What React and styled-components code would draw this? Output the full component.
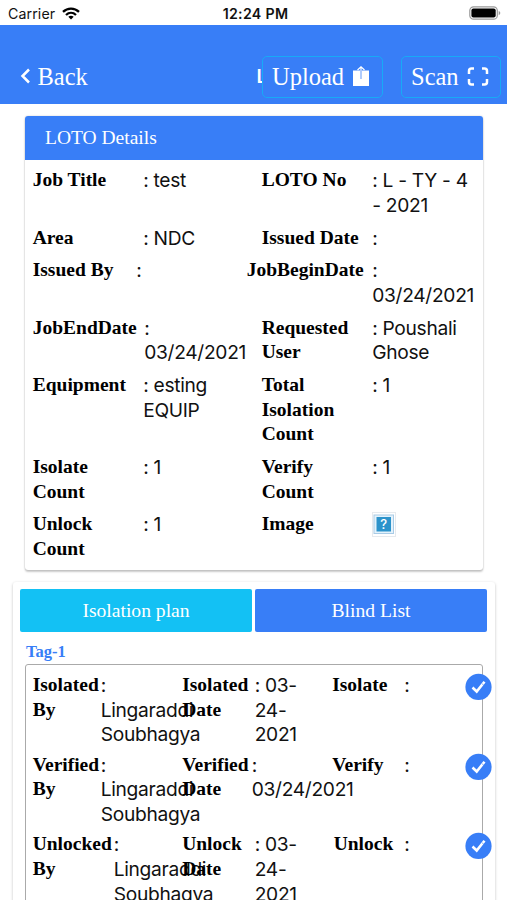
import React from "react";
import styled, { createGlobalStyle } from "styled-components";

const GlobalStyle = createGlobalStyle`
  * {
    box-sizing: border-box;
  }
  body {
    margin: 0;
    height: 900px;
    overflow: hidden;
    background: #fff;
    color: #111;
    font-family: Inter, "Liberation Sans", sans-serif;
  }
`;

const serif = '"Liberation Serif", serif';

const Screen = styled.div`
  width: 507px;
  height: 900px;
  overflow: hidden;
`;

const StatusBar = styled.div`
  display: grid;
  grid-template-columns: 1fr auto 1fr;
  align-items: center;
  height: 25px;
  padding: 2px 6px 0 8px;
  font-size: 14.2px;
  .time {
    padding-left: 2px;
    font-weight: 600;
    letter-spacing: 0.3px;
  }
  .carrier {
    display: flex;
    align-items: center;
    gap: 7px;
    letter-spacing: 0.1px;
  }
  .battery {
    justify-self: end;
    display: flex;
    margin-bottom: 1px;
  }
`;

const Header = styled.header`
  display: flex;
  align-items: center;
  height: 79px;
  padding: 24px 6.5px 0 19.5px;
  background: #387ef7;
  color: #fff;
  font-family: ${serif};
  font-size: 24.5px;
`;

const BackButton = styled.div`
  display: flex;
  align-items: center;
  gap: 7px;
  flex: 1;
`;

const HeaderTitle = styled.div`
  width: 5px;
  overflow: hidden;
  font-family: Inter, sans-serif;
  font-size: 19px;
  font-weight: 600;
`;

const HeaderButton = styled.div`
  display: flex;
  align-items: center;
  justify-content: space-between;
  width: ${({ width }) => width};
  height: 42px;
  padding: ${({ pad }) => pad};
  margin-right: ${({ gap }) => gap || "0"};
  border: 1.5px solid #17aaf6;
  border-radius: 5px;
`;

const Card = styled.section`
  width: 458px;
  height: 454px;
  margin: 12px 0 0 25px;
  border-radius: 3px;
  box-shadow: 0 2px 2px rgba(0, 0, 0, 0.2), 0 0 2px rgba(0, 0, 0, 0.2);
`;

const CardHeader = styled.div`
  height: 44px;
  padding-left: 20px;
  border-radius: 3px 3px 0 0;
  background: #387ef7;
  color: #fff;
  font-family: ${serif};
  font-size: 19.5px;
  line-height: 43px;
`;

const DetailRow = styled.div`
  display: grid;
  grid-template-columns: 110.5px 118.5px 110.5px 1fr;
  padding: 8.2px 0 0 7.7px;
`;

const Label = styled.div`
  margin-left: ${({ shift }) => shift || "0"};
  color: #000;
  font-family: ${serif};
  font-size: 19.5px;
  font-weight: bold;
  line-height: 24.6px;
  white-space: pre;
`;

const Value = styled.div`
  margin-left: ${({ shift }) => shift || "0"};
  font-size: 19.2px;
  letter-spacing: -0.3px;
  line-height: 24.6px;
  white-space: pre;
`;

const Panel = styled.section`
  width: 482px;
  height: 400px;
  margin: 12px 0 0 13px;
  padding: 7px 7px 0;
  border-radius: 3px;
  box-shadow: 0 1px 3px rgba(0, 0, 0, 0.25);
`;

const Tabs = styled.div`
  display: flex;
  gap: 3px;
`;

const Tab = styled.div`
  width: 232px;
  height: 43px;
  border-radius: 2px;
  background: ${({ active }) => (active ? "#13c1f4" : "#387ef7")};
  color: #fff;
  font-family: ${serif};
  font-size: 19.6px;
  line-height: 43px;
  text-align: center;
`;

const TagName = styled.div`
  height: 32px;
  padding: 10px 0 0 6px;
  color: #387ef7;
  font-family: ${serif};
  font-size: 16.5px;
  font-weight: bold;
`;

const TagBox = styled.div`
  width: 457.5px;
  height: 300px;
  margin-left: 5px;
  padding-left: 6.7px;
  border: 1.5px solid #aaa;
  border-radius: 3px;
`;

const TagRow = styled.div`
  display: grid;
  grid-template-columns: 68px 81.5px 72.5px 77.5px 72px 61px 27px;
  height: 79.7px;
  padding-top: 8px;
`;

const Check = styled.div`
  height: 27px;
`;

const details = [
  [{ label: "Job Title", value: ": test" }, { label: "LOTO No", value: ": L - TY - 4\n- 2021" }],
  [{ label: "Area", value: ": NDC" }, { label: "Issued Date", value: ":" }],
  [
    { label: "Issued By", value: ":", valueShift: "-7px" },
    { label: "JobBeginDate", value: ":\n03/24/2021", labelShift: "-15px" },
  ],
  [
    { label: "JobEndDate", value: ":\n03/24/2021", valueShift: "1px" },
    { label: "Requested\nUser", value: ": Poushali\nGhose" },
  ],
  [{ label: "Equipment", value: ": esting\nEQUIP" }, { label: "Total\nIsolation\nCount", value: ": 1" }],
  [{ label: "Isolate\nCount", value: ": 1" }, { label: "Verify\nCount", value: ": 1" }],
  [{ label: "Unlock\nCount", value: ": 1" }, { label: "Image", image: true }],
];

const tagRows = [
  { by: "Isolated\nBy", dateLabel: "Isolated\nDate", date: ": 03-\n24-\n2021", action: "Isolate" },
  {
    by: "Verified\nBy",
    dateLabel: "Verified\nDate",
    date: ":\n03/24/2021",
    dateShift: "-3px",
    action: "Verify",
  },
  {
    by: "Unlocked\nBy",
    byShift: "13px",
    dateLabel: "Unlock\nDate",
    date: ": 03-\n24-\n2021",
    action: "Unlock",
    actionShift: "1.5px",
  },
];

const WifiIcon = () => (
  <svg width="18" height="13" viewBox="0 0 18 13" fill="none" stroke="#000" strokeWidth="2.3">
    <path d="M1 4.8C5.5.5 12.5.5 17 4.8" />
    <path d="M4 8C7 5.2 11 5.2 14 8" />
    <path d="M9 12.5L6.3 9.8Q9 7.7 11.7 9.8Z" fill="#000" stroke="none" />
  </svg>
);

const BatteryIcon = () => (
  <svg width="32" height="14" viewBox="0 0 32 14">
    <rect x=".8" y=".8" width="27.5" height="12.4" rx="3.8" fill="none" stroke="#999" strokeWidth="1.2" />
    <rect x="2.4" y="2.4" width="24.3" height="9.2" rx="2" />
    <path d="M29.7 5v4.2q1.6-.6 1.6-2.1T29.7 5" fill="#999" />
  </svg>
);

const BrokenImage = () => (
  <svg width="25" height="25" viewBox="0 0 25 25">
    <rect x=".5" y=".5" width="23" height="24" fill="#fff" stroke="#e6eaee" />
    <rect x="2" y="3" width="19.5" height="18.5" fill="#e4f2fb" stroke="#a9cbe6" />
    <rect x="4.5" y="5" width="14.5" height="14.5" fill="#2c93cb" />
    <text x="11.8" y="16.8" fontSize="13" fontWeight="500" fill="#fff" textAnchor="middle">?</text>
  </svg>
);

export default function App() {
  return (
    <Screen>
      <GlobalStyle />
      <StatusBar>
        <div className="carrier">
          Carrier
          <WifiIcon />
        </div>
        <div className="time">12:24 PM</div>
        <div className="battery">
          <BatteryIcon />
        </div>
      </StatusBar>
      <Header>
        <BackButton>
          <svg width="11" height="18" viewBox="0 0 11 18" fill="none" stroke="#fff" strokeWidth="2.5">
            <path d="M9 1.500L2.500 8L9 14.500" />
          </svg>
          Back
        </BackButton>
        <HeaderTitle>L</HeaderTitle>
        <HeaderButton width="121px" gap="18px" pad="0 11.5px 0 9.5px">
          Upload
          <svg width="18" height="22" viewBox="0 0 18 22" fill="none" stroke="#fff">
            <path d="M1 4.500H8V13H10V4.500H17V20H1Z" fill="#fff" stroke="none" />
            <path d="M9 13V1M5.500 4L9 .8L12.500 4" strokeWidth="1.2" />
          </svg>
        </HeaderButton>
        <HeaderButton width="100px" pad="0 11px 0 9.5px">
          Scan
          <svg width="22" height="20" viewBox="0 0 22 20" fill="none" stroke="#fff" strokeWidth="2.5">
            <path d="M2 7V4Q2 1.500 4.500 1.500H7M15 1.500H17.500Q20 1.500 20 4V7M20 12V15Q20 17.500 17.500 17.500H15M7 17.500H4.500Q2 17.500 2 15V12" />
          </svg>
        </HeaderButton>
      </Header>
      <Card>
        <CardHeader>LOTO Details</CardHeader>
        {details.map((row) => (
          <DetailRow key={row[0].label}>
            {row.map((item) => (
              <React.Fragment key={item.label}>
                <Label shift={item.labelShift}>{item.label}</Label>
                {item.image ? <BrokenImage /> : <Value shift={item.valueShift}>{item.value}</Value>}
              </React.Fragment>
            ))}
          </DetailRow>
        ))}
      </Card>
      <Panel>
        <Tabs>
          <Tab active>Isolation plan</Tab>
          <Tab>Blind List</Tab>
        </Tabs>
        <TagName>Tag-1</TagName>
        <TagBox>
          {tagRows.map((row) => (
            <TagRow key={row.action}>
              <Label>{row.by}</Label>
              <Value shift={row.byShift}>{":\nLingaraddi\nSoubhagya"}</Value>
              <Label>{row.dateLabel}</Label>
              <Value shift={row.dateShift}>{row.date}</Value>
              <Label shift={row.actionShift}>{row.action}</Label>
              <Value>:</Value>
              <Check>
                <svg width="27" height="27" viewBox="0 0 27 27">
                  <circle cx="13.5" cy="13.9" r="13.1" fill="#387ef7" />
                  <path d="M7.5 14.500L11.700 18.500L19.500 8.800" fill="none" stroke="#fff" strokeWidth="2.6" />
                  <path d="M16.800 10.600L18.800 12.200" stroke="#387ef7" strokeWidth=".6" />
                </svg>
              </Check>
            </TagRow>
          ))}
        </TagBox>
      </Panel>
    </Screen>
  );
}
